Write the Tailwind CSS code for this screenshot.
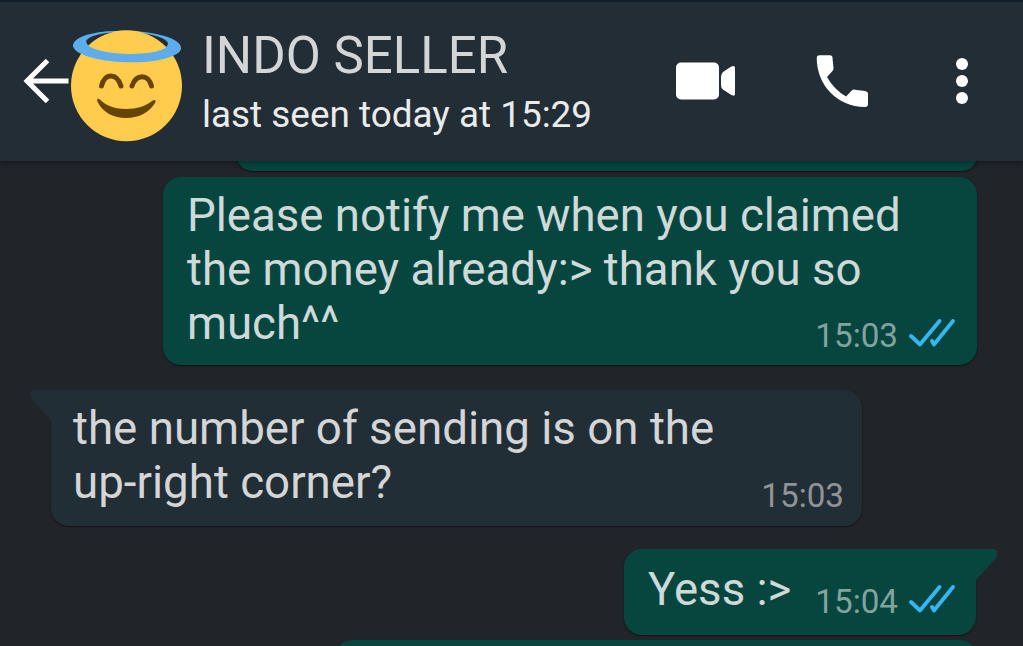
<!DOCTYPE html>
<html lang="en">
<head>
    <meta charset="UTF-8">
    <meta name="viewport" content="width=device-width, initial-scale=1.0">
    <title>INDO SELLER</title>
    <script src="https://cdn.jsdelivr.net/npm/@tailwindcss/browser@4"></script>
</head>
<body class="bg-[#212429] font-[Roboto,sans-serif] w-[1023px] h-[646px] overflow-hidden">
    <!-- Header -->
    <header class="relative z-10 flex items-start h-[161px] bg-[#232d36] border-t-2 border-[#13202a] shadow-[0_2px_6px_rgba(0,0,0,0.35)]">
        <svg class="mt-[56px] ml-[22px] w-[47px] h-[46px] shrink-0" viewBox="0 0 47 46" fill="none" stroke="#fff" stroke-width="5">
            <path d="M46.500 23H5M25.500 2.500L5 23L25.500 43.500"/>
        </svg>
        <svg class="mt-[26px] ml-0.5 w-[112px] h-[116px] shrink-0" viewBox="71 28 112 116">
            <!-- back of the halo, head, then front of the halo -->
            <path transform="rotate(1.500 127 46)" fill="#5dadec" fill-rule="evenodd" d="M73 46.500a54 15.800 0 0 1 108 0a54 15.800 0 0 1-108 0zM86 43a41 11 0 0 0 82 0a41 11 0 0 0-82 0z"/>
            <circle cx="126.500" cy="85.700" r="55.500" fill="#ffcc4d"/>
            <path transform="rotate(1.500 127 46)" fill="#5dadec" d="M73 46.500a54 15.800 0 0 0 108 0l-13-3.500a41 11 0 0 1-82 0z"/>
            <path d="M101.500 86c3-13.500 15.500-13.500 19.500 0M132 86c4-12.500 16.500-12.500 19.500 0" fill="none" stroke="#664500" stroke-width="5" stroke-linecap="round"/>
            <path d="M97.500 99c-1 1 0 3 1 4.500 5 9 15 14.500 27.500 14.500s22-5 28-13.500c1-1.500 2-3 1.500-4s-2-.5-3.500.5c-6 5-15 8-26 8s-19-3-25-8.500c-1.500-1.500-3-2-3.500-1.500z" fill="#664500"/>
        </svg>
        <div class="ml-[19px] mt-[25px] w-[441px] shrink-0 whitespace-nowrap">
            <h1 class="text-[51px] leading-[58px] text-[#d3d5d7]">INDO SELLER</h1>
            <p class="text-[36.9px] leading-[44px] mt-2 text-[#e9ebec]">last seen today at 15:29</p>
        </div>
        <svg class="mt-[60px] ml-[33px] w-[60px] h-[38px] shrink-0" viewBox="0 0 60 38" fill="#fff">
            <rect x="0" y="0.500" width="43" height="37" rx="5"/>
            <path d="M45 15q0-3 2-5l7.500-5q4.500-2.500 4.500 1v26q0 3-4.500.5L47 27.500q-2-1.500-2-4.500z"/>
        </svg>
        <svg class="mt-[53px] ml-20 w-[52px] h-[52px] shrink-0" viewBox="0 0 52 52" fill="#fff">
            <path d="M3.500 0.300H14Q16.500 0.300 16.500 3L17.500 13Q17.700 15 16 16.500L11 22Q18 34.500 30 41.500L35.500 35.700Q37 34.200 39 34.700L49 36Q52 36.500 52 39V49Q52 52 49 52C21 52 1 30 0.700 3.300Q0.700 0.300 3.500 0.300Z"/>
        </svg>
        <svg class="mt-[55px] ml-[87px] w-[14px] h-[48px] shrink-0" viewBox="0 0 14 48" fill="#fff">
            <circle cx="7" cy="7" r="6"/>
            <circle cx="7" cy="24" r="6"/>
            <circle cx="7" cy="41" r="6"/>
        </svg>
    </header>

    <!-- Messages -->
    <main class="flex flex-col h-[485px] overflow-hidden pr-[46px]">
        <div class="self-end shrink-0 w-[740px] h-[30px] -mt-5 rounded-[20px] bg-[#06463f] shadow-[0_1px_2px_rgba(0,0,0,0.5)]"></div>

        <div class="self-end shrink-0 relative mt-[6px] w-[814px] h-[188px] pl-6 pt-3 rounded-[18px] bg-[#06463f] shadow-[0_1px_2px_rgba(0,0,0,0.5)]">
            <p class="text-[45.6px] leading-[54px] text-[#cddad9] whitespace-nowrap">Please notify me when you claimed<br>the money already:&gt; thank you so<br>much^^</p>
            <div class="absolute right-[21px] bottom-[9px] flex items-center gap-2.5">
                <span class="text-[33.2px] leading-10 text-[#83a39f]">15:03</span>
                <svg class="mb-0.5 w-[48px] h-[32px]" viewBox="0 0 48 32" fill="none" stroke="#34b7f1" stroke-width="3.800" stroke-linecap="round" stroke-linejoin="round">
                    <path d="M3 17L12 25.500L31.500 2M24 22L26 25.500L45 2"/>
                </svg>
            </div>
        </div>

        <div class="self-start shrink-0 relative mt-[25px] ml-[51px] w-[811px] h-[136px] pl-[22px] pt-3 rounded-[18px] rounded-tl-none bg-[#222e35] shadow-[0_1px_2px_rgba(0,0,0,0.5)]">
            <svg class="absolute -left-[21px] top-0 w-[22px] h-[34px]" viewBox="0 0 22 34" fill="#222e35">
                <path d="M22 0H4Q-2 2 2 9L21 31L22 34Z"/>
            </svg>
            <p class="text-[45.7px] leading-[54px] text-[#d3d5d7] whitespace-nowrap">the number of sending is on the<br>up-right corner?</p>
            <span class="absolute right-[18px] bottom-2.5 text-[33.2px] leading-10 text-[#909498]">15:03</span>
        </div>

        <div class="self-end shrink-0 relative mt-[23px] mr-px w-[352px] h-[86px] pl-6 pt-3.5 rounded-[18px] rounded-tr-none bg-[#06463f] shadow-[0_1px_2px_rgba(0,0,0,0.5)]">
            <svg class="absolute -right-[22px] top-0 w-[23px] h-[34px]" viewBox="0 0 23 34" fill="#06463f">
                <path d="M0 0H19Q25 2 21 9L1 31L0 34Z"/>
            </svg>
            <p class="text-[45.6px] leading-[54px] text-[#cddad9] whitespace-nowrap">Yess :&gt;</p>
            <div class="absolute right-5 bottom-[13px] flex items-center gap-2.5">
                <span class="text-[33.2px] leading-10 text-[#83a39f]">15:04</span>
                <svg class="mb-0.5 w-[48px] h-[32px]" viewBox="0 0 48 32" fill="none" stroke="#34b7f1" stroke-width="3.800" stroke-linecap="round" stroke-linejoin="round">
                    <path d="M3 17L12 25.500L31.500 2M24 22L26 25.500L45 2"/>
                </svg>
            </div>
        </div>

        <div class="self-end shrink-0 mt-[5px] w-[642px] h-[60px] rounded-[18px] bg-[#06463f]"></div>
    </main>
</body>
</html>
